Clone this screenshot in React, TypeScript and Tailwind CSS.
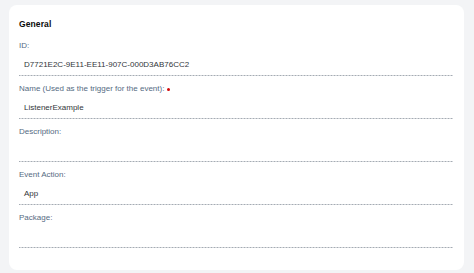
import React from 'react';

type Field = { label: string; value: string; required?: boolean };

const fields: Field[] = [
  { label: 'ID:', value: 'D7721E2C-9E11-EE11-907C-000D3AB76CC2' },
  { label: 'Name (Used as the trigger for the event):', value: 'ListenerExample', required: true },
  { label: 'Description:', value: '' },
  { label: 'Event Action:', value: 'App' },
  { label: 'Package:', value: '' },
];

export default function App() {
  return (
    <div
      className="w-[474px] h-[273px] bg-[#f3f4f6] pl-[9px] pr-[10px] pt-[5px] pb-[3px]"
      style={{ fontFamily: '"Liberation Sans", Arial, sans-serif' }}
    >
      <div className="h-full bg-white rounded-[8px] pl-[10px] pr-[11px] pt-[13px]">
        {/* Header */}
        <h2 className="text-[8.5px] leading-[12px] font-bold text-[#0b0b0b] tracking-[0.1px] mb-[3px]">General</h2>

        {fields.map(f => (
          <div key={f.label} className="pt-[7px]">
            <div className="text-[8px] leading-[12px] text-[#556b82] flex items-center gap-[3px]">
              <span>{f.label}</span>
              {f.required && <span className="w-[3px] h-[3px] rounded-full bg-[#d20a0a]" />}
            </div>
            <div className="h-[24px] flex items-center pt-[2px] px-[5px] bg-[linear-gradient(to_right,#a4abb3_2px,transparent_2px)] bg-[length:3px_1px] bg-repeat-x bg-bottom text-[8px] text-[#32363a]">
              {f.value}
            </div>
          </div>
        ))}
      </div>
    </div>
  );
}
